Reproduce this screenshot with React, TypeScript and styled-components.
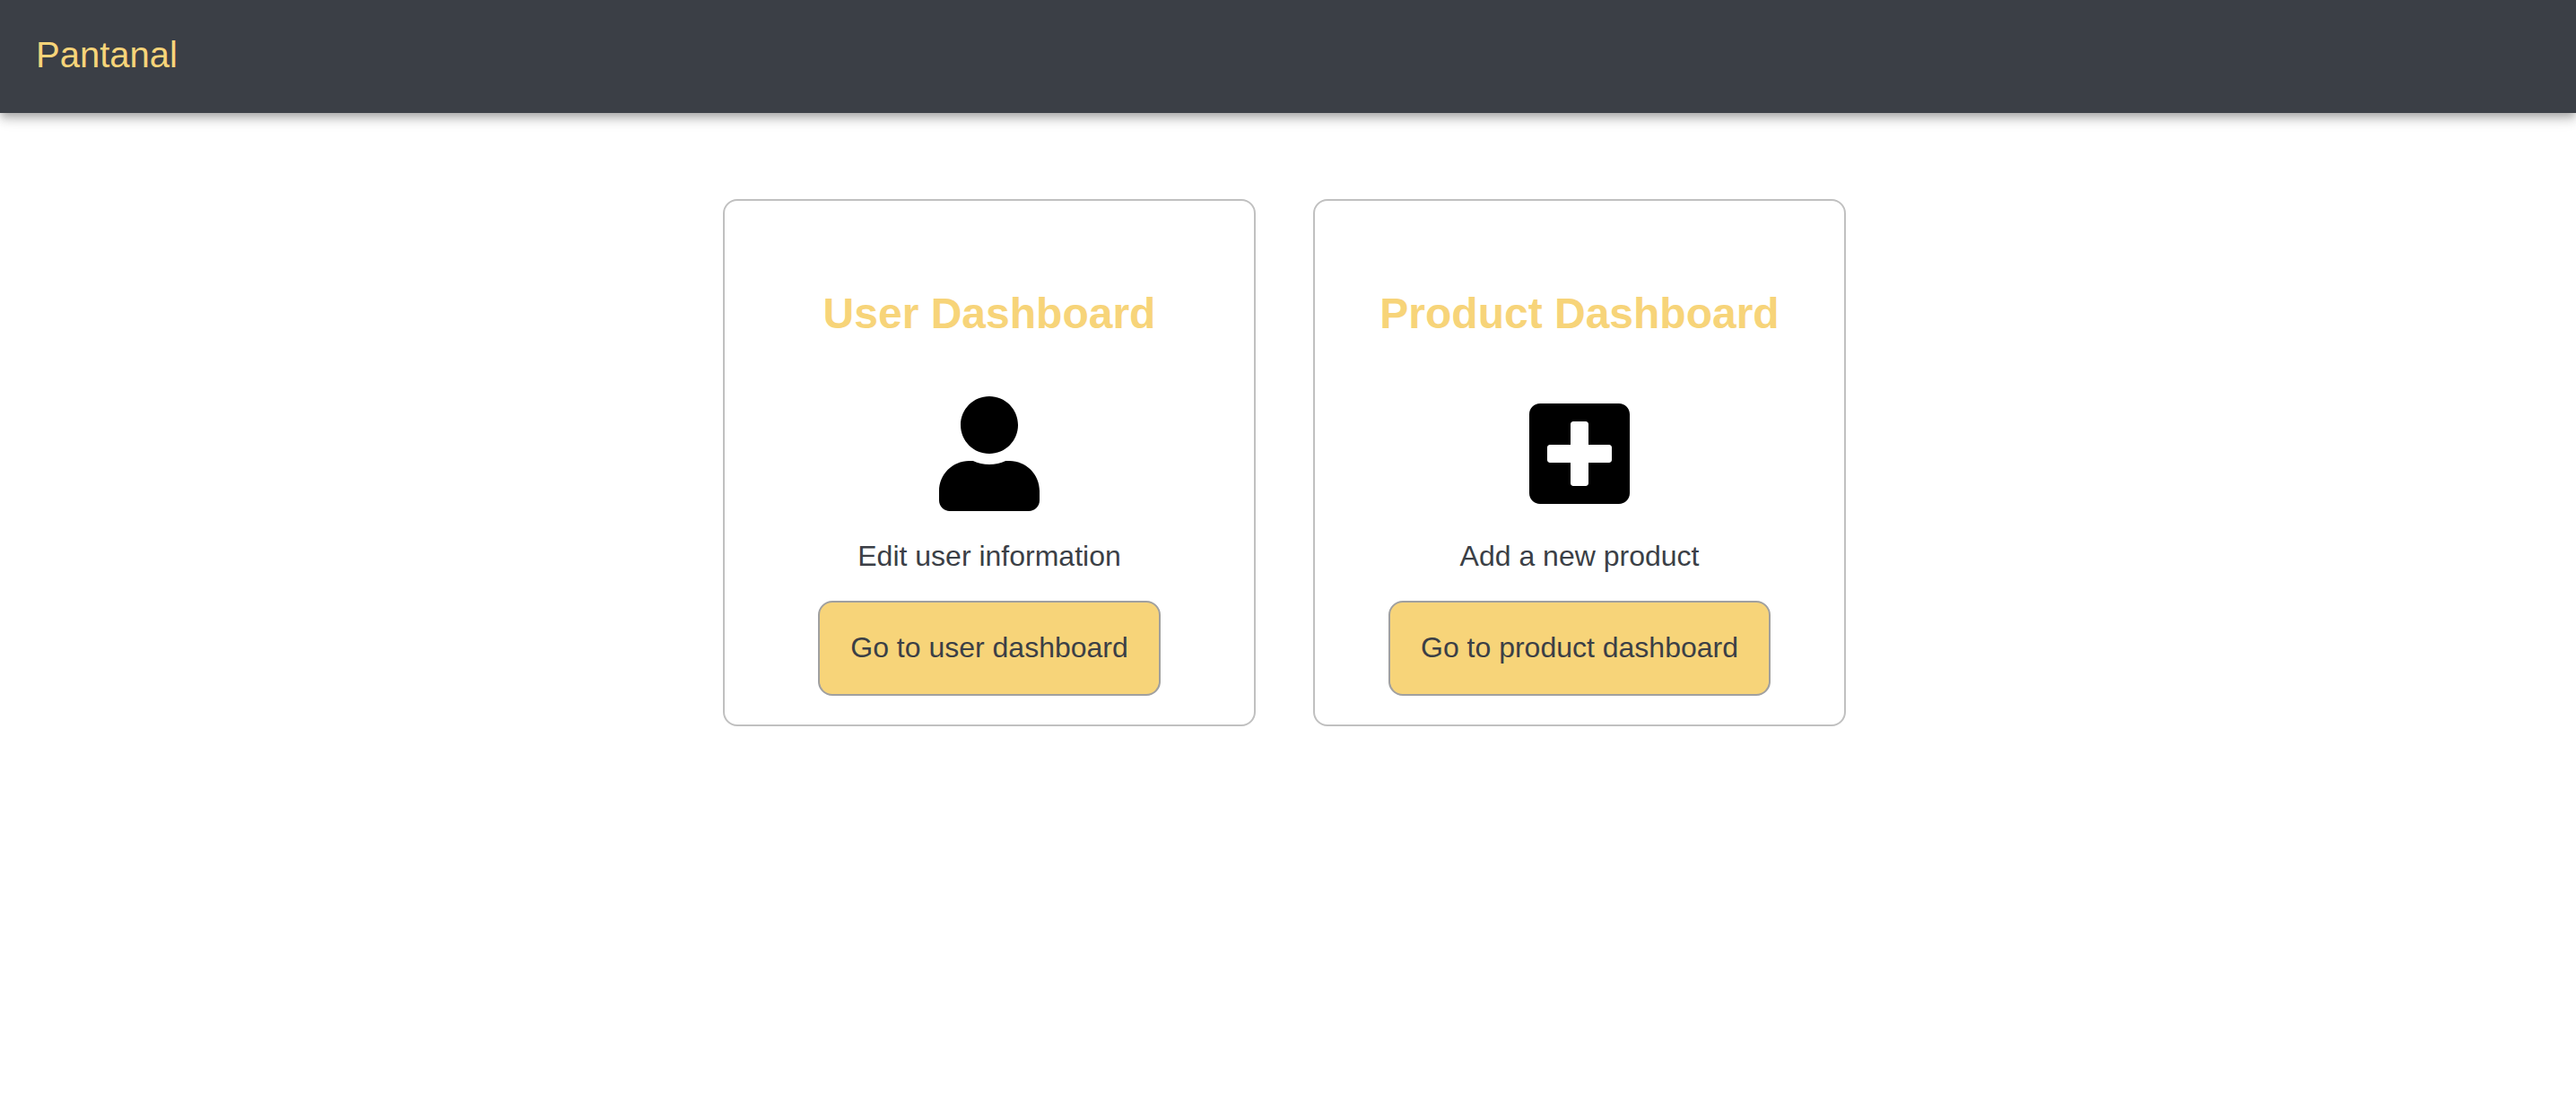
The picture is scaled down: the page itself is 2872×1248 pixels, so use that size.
import React from "react";
import styled, { createGlobalStyle } from "styled-components";
import { FaPlusSquare, FaUser } from "react-icons/fa";

const colors = {
  dark: "#3b3f46",
  gold: "#f7d479",
  cardBorder: "#c0c0c0",
  buttonBorder: "#a0a0a0",
};

const GlobalStyle = createGlobalStyle`
  *, *::before, *::after {
    box-sizing: border-box;
  }
  body {
    margin: 0;
    background: #fff;
    color: ${colors.dark};
    font-family: Helvetica, "Liberation Sans", Arial, sans-serif;
    font-size: 32px;
    line-height: 36px;
  }
`;

const Header = styled.header`
  display: flex;
  padding: 38px 40px 42px;
  background: ${colors.dark};
  box-shadow:
    0 4px 8px -2px rgba(0, 0, 0, 0.2),
    0 8px 10px 0 rgba(0, 0, 0, 0.14),
    0 2px 20px 0 rgba(0, 0, 0, 0.12);
`;

const Brand = styled.a`
  color: ${colors.gold};
  font-size: 40px;
  line-height: 46px;
  text-decoration: none;
`;

const Main = styled.main`
  display: flex;
  flex-wrap: wrap;
  justify-content: center;
  gap: 64px;
  padding: 96px 40px 96px 32px;
`;

const Card = styled.section`
  display: flex;
  flex-direction: column;
  align-items: center;
  width: 594px;
  padding: 98px 32px 32px;
  border: 2px solid ${colors.cardBorder};
  border-radius: 16px;
  text-align: center;
`;

const CardTitle = styled.h2`
  margin: 0 0 64px;
  color: ${colors.gold};
  font-size: 48px;
  line-height: 56px;
`;

const CardIcon = styled.div`
  display: flex;
  margin-bottom: 32px;
  color: #000;

  svg {
    width: 112px;
    height: 128px;
  }
`;

const CardText = styled.p`
  margin: 0 0 32px;
`;

const CardButton = styled.button`
  padding: 32px 34px 34px;
  border: 2px solid ${colors.buttonBorder};
  border-radius: 16px;
  background: ${colors.gold};
  color: inherit;
  font: inherit;
  cursor: pointer;
`;

const dashboards = [
  {
    title: "User Dashboard",
    icon: <FaUser aria-hidden="true" />,
    text: "Edit user information",
    action: "Go to user dashboard",
  },
  {
    title: "Product Dashboard",
    icon: <FaPlusSquare aria-hidden="true" />,
    text: "Add a new product",
    action: "Go to product dashboard",
  },
];

export default function App() {
  return (
    <>
      <GlobalStyle />
      <Header>
        <Brand href="#">Pantanal</Brand>
      </Header>
      <Main>
        {dashboards.map((item) => (
          <Card key={item.title}>
            <CardTitle>{item.title}</CardTitle>
            <CardIcon>{item.icon}</CardIcon>
            <CardText>{item.text}</CardText>
            <CardButton type="button">{item.action}</CardButton>
          </Card>
        ))}
      </Main>
    </>
  );
}
